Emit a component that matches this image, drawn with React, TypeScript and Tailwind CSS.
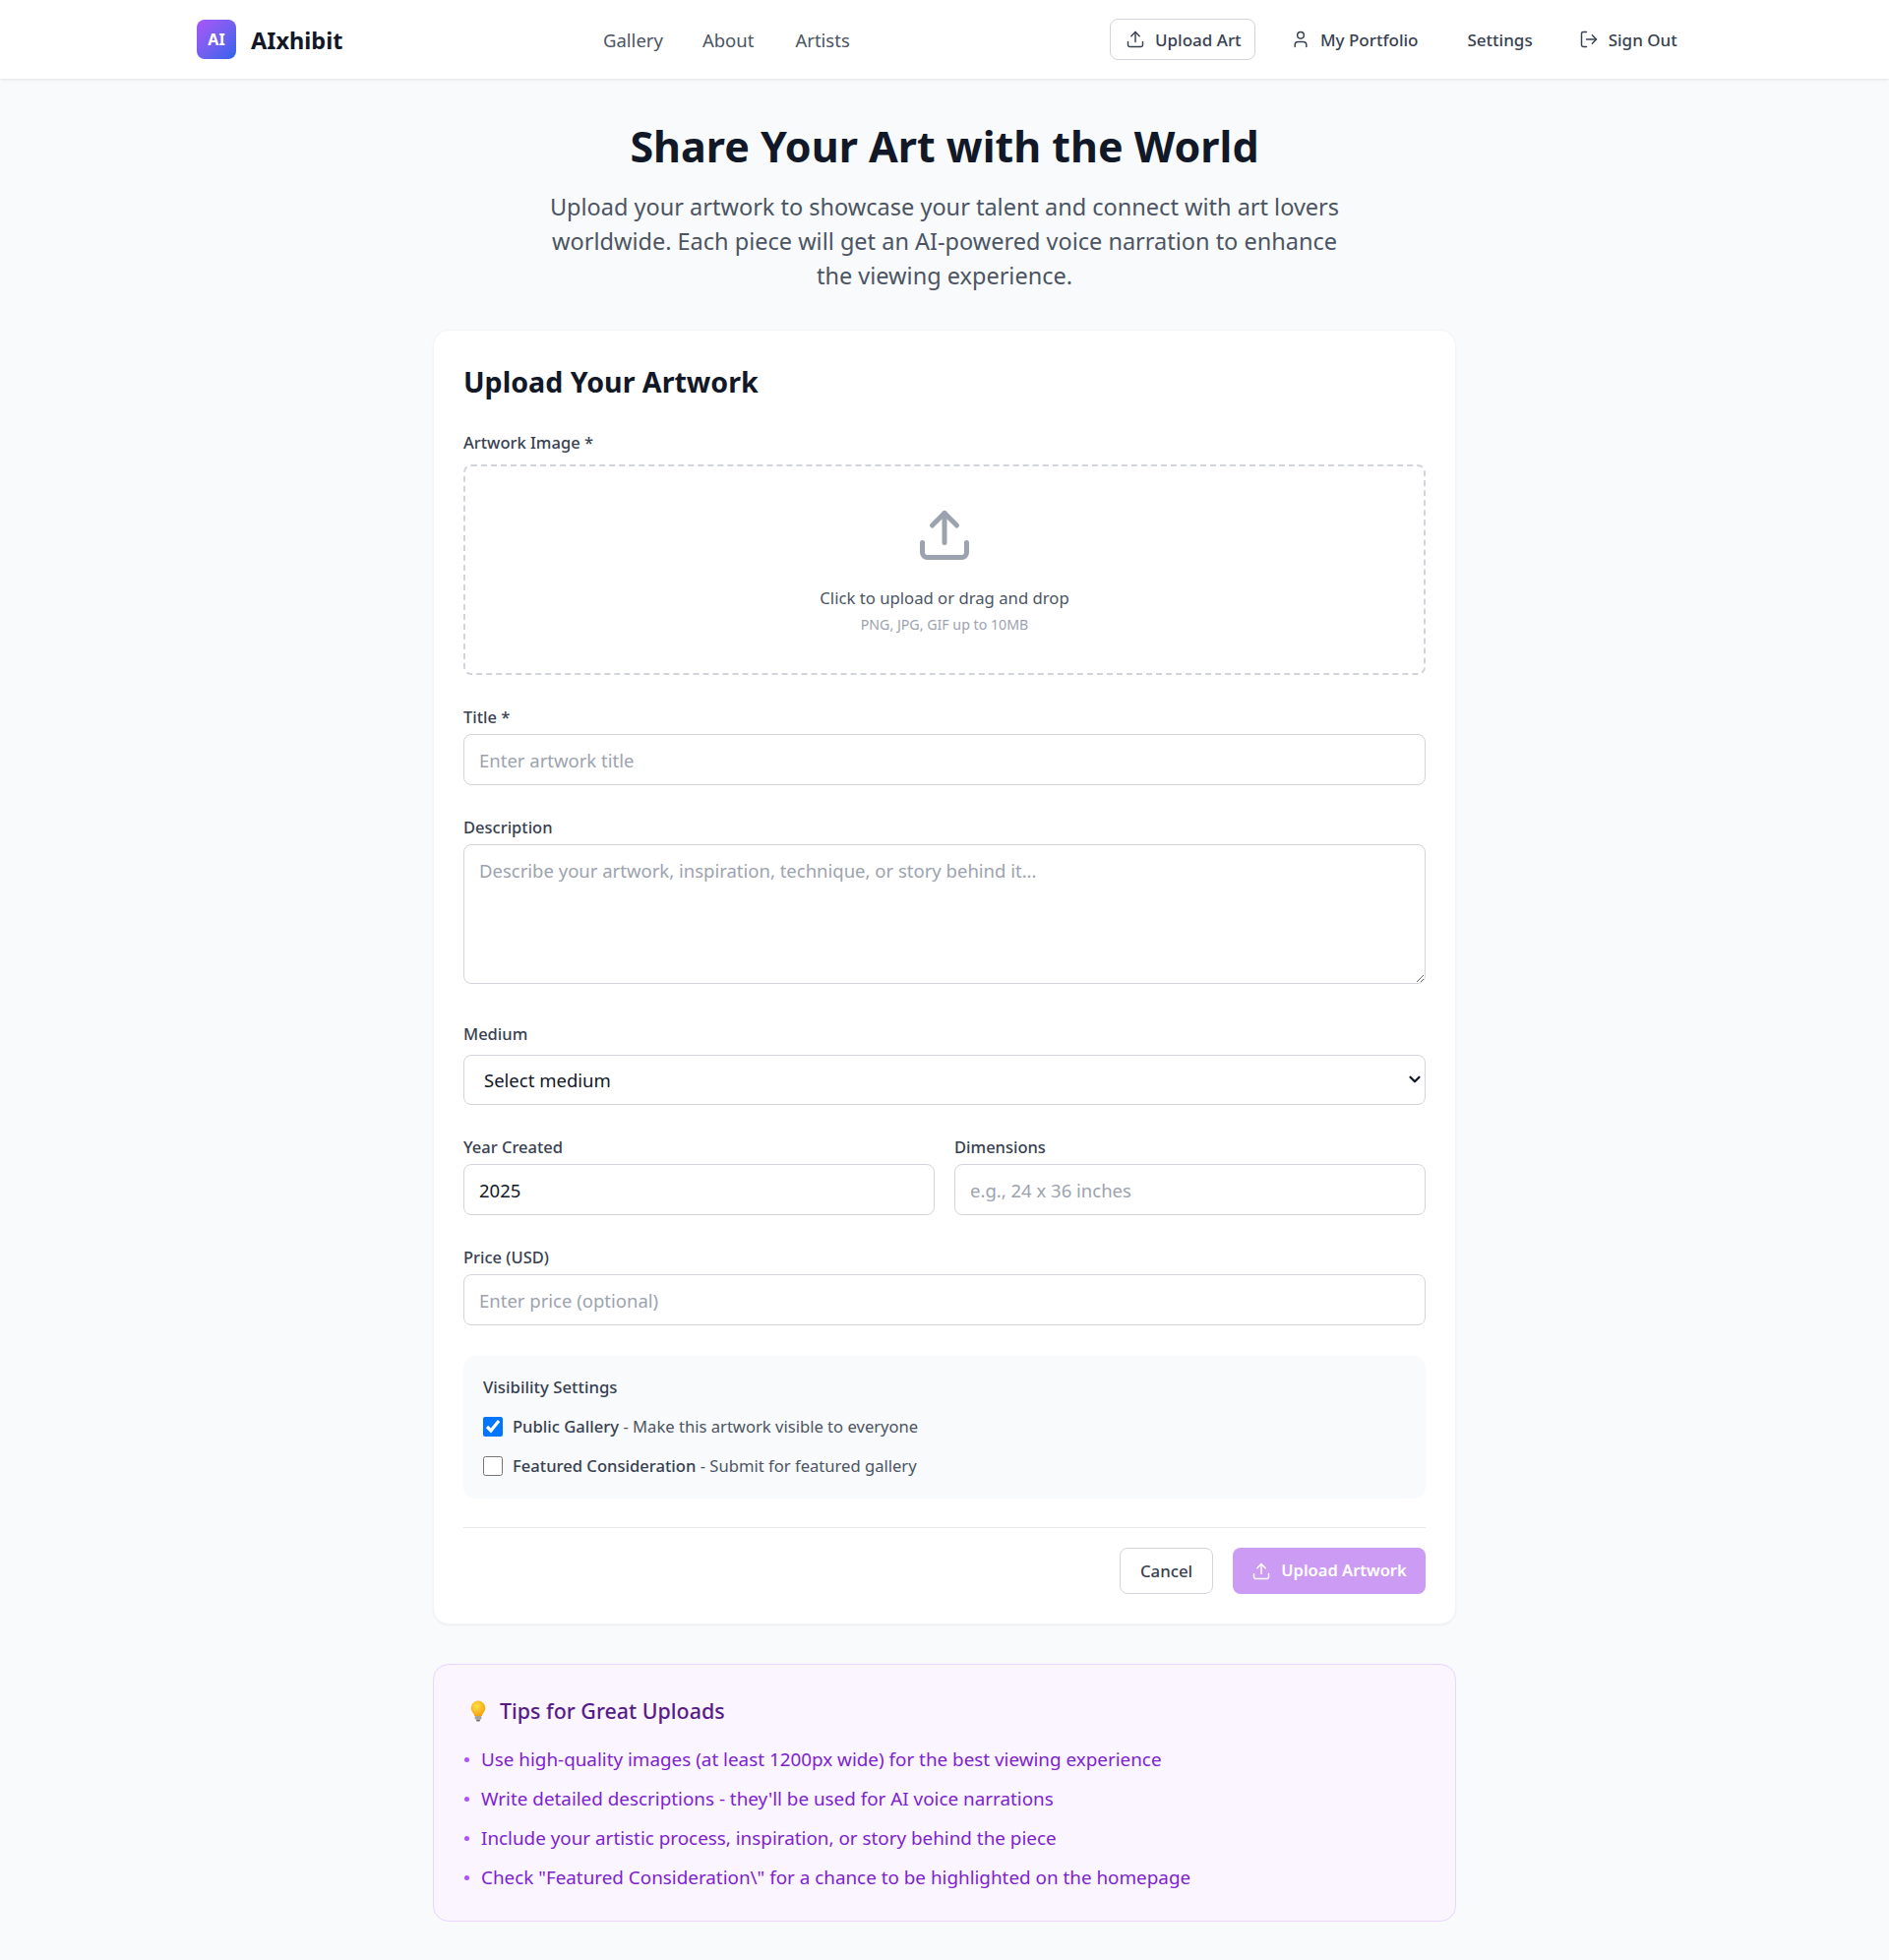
import { Upload, User, LogOut, ChevronDown } from "lucide-react";

const field =
  "block w-full h-[52px] rounded-lg border border-[#d1d5db] bg-white px-[15px] text-[18.5px] text-[#111827] placeholder:text-[#9ca3af] outline-none";
const label = "block text-[16.5px] leading-[24px] font-medium text-[#374151]";

function Bulb() {
  return (
    <svg width="16" height="22" viewBox="0 0 16 22" className="shrink-0">
      <defs>
        <radialGradient id="bulb" cx="0.4" cy="0.35" r="0.7">
          <stop offset="0" stopColor="#fde047" />
          <stop offset="1" stopColor="#f59e0b" />
        </radialGradient>
      </defs>
      <path d="M8 .5A7.3 7.3 0 0 0 .7 7.8c0 2.7 1.3 4 2.5 5.6.7.9.9 1.6.9 2.6h7.8c0-1 .2-1.7.9-2.6 1.2-1.6 2.5-2.9 2.5-5.6A7.3 7.3 0 0 0 8 .5z" fill="url(#bulb)" />
      <rect x="4.6" y="16" width="6.8" height="3.4" rx="1" fill="#a8a29e" />
      <rect x="6" y="19.4" width="4" height="2" rx="1" fill="#78716c" />
    </svg>
  );
}

export default function App() {
  return (
    <div className="min-h-[1992px] bg-[#f9fafb] font-['Noto_Sans',sans-serif]">
      <header className="h-20 bg-white shadow-[0_1px_3px_rgba(0,0,0,0.1)]">
        <div className="mx-auto flex h-full w-[1520px] items-center">
          <div className="flex w-[413px] items-center gap-[15px]">
            <div className="flex h-10 w-10 items-center justify-center rounded-lg bg-gradient-to-br from-[#a855f7] to-[#2563eb] text-[16px] font-bold text-white">
              AI
            </div>
            <span className="pt-[3px] text-[23.5px] font-bold text-[#111827]">AIxhibit</span>
          </div>
          <nav className="flex w-[515px] items-center gap-10 pt-[1px] text-[18.5px] text-[#4b5563]">
            <span>Gallery</span>
            <span>About</span>
            <span className="ml-[2px]">Artists</span>
          </nav>
          <div className="flex items-center text-[17px] font-medium text-[#374151]">
            <div className="flex h-[42px] w-[148px] items-center gap-[10px] rounded-lg border border-[#d1d5db] pl-[15px]">
              <Upload size={20} strokeWidth={1.75} />
              <span className="pt-[1px]">Upload Art</span>
            </div>
            <div className="ml-9 flex items-center gap-[10px]">
              <User size={20} strokeWidth={1.75} />
              <span className="pt-[1px]">My Portfolio</span>
            </div>
            <span className="ml-[50px] pt-[1px]">Settings</span>
            <div className="ml-[47px] flex items-center gap-[10px]">
              <LogOut size={20} strokeWidth={1.75} />
              <span className="pt-[1px]">Sign Out</span>
            </div>
          </div>
        </div>
      </header>

      <main className="mx-auto w-[1040px] pb-[39px] pt-[40px]">
        <h1 className="text-center text-[43px] font-bold leading-[58px] text-[#111827]">Share Your Art with the World</h1>
        <p className="mx-auto mt-[15px] w-[820px] text-center text-[23.5px] leading-[35px] text-[#4b5563]">
          Upload your artwork to showcase your talent and connect with art lovers worldwide. Each piece will get an AI-powered voice narration to enhance the viewing experience.
        </p>

        <section className="mt-[37px] rounded-2xl border border-[#f3f4f6] bg-white px-[30px] pb-[30px] pt-[34px] shadow-[0_1px_2px_rgba(0,0,0,0.05)]">
          <h2 className="text-[28.6px] font-bold leading-[36px] text-[#111827]">Upload Your Artwork</h2>

          <label className={label + " mt-[32px]"}>Artwork Image *</label>
          <div className="mt-[10px] flex h-[214px] flex-col items-center rounded-lg border-2 border-dashed border-[#d1d5db] pt-[40px]">
            <Upload size={60} strokeWidth={2} className="text-[#9ca3af]" />
            <p className="mt-[20px] text-[16.7px] leading-[28px] text-[#4b5563]">Click to upload or drag and drop</p>
            <p className="mt-[3px] text-[14.2px] leading-[20px] text-[#9ca3af]">PNG, JPG, GIF up to 10MB</p>
          </div>

          <label className={label + " mt-[31px]"}>Title *</label>
          <input className={field + " mt-[5px]"} placeholder="Enter artwork title" />

          <label className={label + " mt-[31px]"}>Description</label>
          <textarea className={field + " mt-[5px] !h-[142px] pt-[12px]"} placeholder="Describe your artwork, inspiration, technique, or story behind it..." />

          <label className={label + " mt-[39px]"}>Medium</label>
          <div className="relative mt-[9px]">
            <select className={field + " !h-[51px] !pl-5 appearance-none"}>
              <option>Select medium</option>
            </select>
            <ChevronDown size={18} strokeWidth={3} className="pointer-events-none absolute right-[2px] top-[16px] text-[#111827]" />
          </div>

          <div className="mt-[31px] grid grid-cols-2 gap-5">
            <div>
              <label className={label}>Year Created</label>
              <input className={field + " mt-[5px]"} defaultValue="2025" />
            </div>
            <div>
              <label className={label}>Dimensions</label>
              <input className={field + " mt-[5px]"} placeholder="e.g., 24 x 36 inches" />
            </div>
          </div>

          <label className={label + " mt-[31px]"}>Price (USD)</label>
          <input className={field + " mt-[5px]"} placeholder="Enter price (optional)" />

          <div className="mt-[31px] h-[145px] rounded-xl bg-[#f9fafb] px-5 pt-[20px]">
            <p className="text-[16.8px] font-medium leading-[24px] text-[#374151]">Visibility Settings</p>
            <label className="mt-[16px] flex h-[24px] items-center gap-[10px] text-[16.6px] text-[#4b5563]">
              <input type="checkbox" defaultChecked className="m-0 h-5 w-5" />
              <span><b className="font-medium text-[#374151]">Public Gallery</b> - Make this artwork visible to everyone</span>
            </label>
            <label className="mt-[16px] flex h-[24px] items-center gap-[10px] text-[16.6px] text-[#4b5563]">
              <input type="checkbox" className="m-0 h-5 w-5" />
              <span><b className="font-medium text-[#374151]">Featured Consideration</b> - Submit for featured gallery</span>
            </label>
          </div>

          <div className="mt-[29px] flex justify-end gap-5 border-t border-[#e5e7eb] pt-[20px] text-[16.8px] font-medium">
            <button className="h-[47px] w-[95px] rounded-lg border border-[#d1d5db] text-[#374151]">Cancel</button>
            <button className="flex h-[47px] w-[196px] items-center justify-center gap-[10px] rounded-lg bg-[#cc9bf3] text-[16.5px] font-semibold text-white">
              <Upload size={20} strokeWidth={1.75} />
              Upload Artwork
            </button>
          </div>
        </section>

        <section className="mt-10 rounded-2xl border border-[#e9d5ff] bg-[#faf5ff] px-[30px] pb-[24px] pt-[29px]">
          <h3 className="flex items-center gap-[14px] text-[21.4px] font-medium leading-[36px] text-[#581c87]">
            <span className="ml-[7px]"><Bulb /></span>
            Tips for Great Uploads
          </h3>
          <ul className="mt-[11px] text-[18.85px] leading-[40px] text-[#7e22ce]">
            {[
              "Use high-quality images (at least 1200px wide) for the best viewing experience",
              "Write detailed descriptions - they'll be used for AI voice narrations",
              "Include your artistic process, inspiration, or story behind the piece",
              'Check "Featured Consideration\\" for a chance to be highlighted on the homepage',
            ].map((t) => (
              <li key={t} className="flex items-center gap-[12px]">
                <span className="ml-[1px] h-[5px] w-[5px] rounded-full bg-[#a855f7]" />
                {t}
              </li>
            ))}
          </ul>
        </section>
      </main>
    </div>
  );
}
